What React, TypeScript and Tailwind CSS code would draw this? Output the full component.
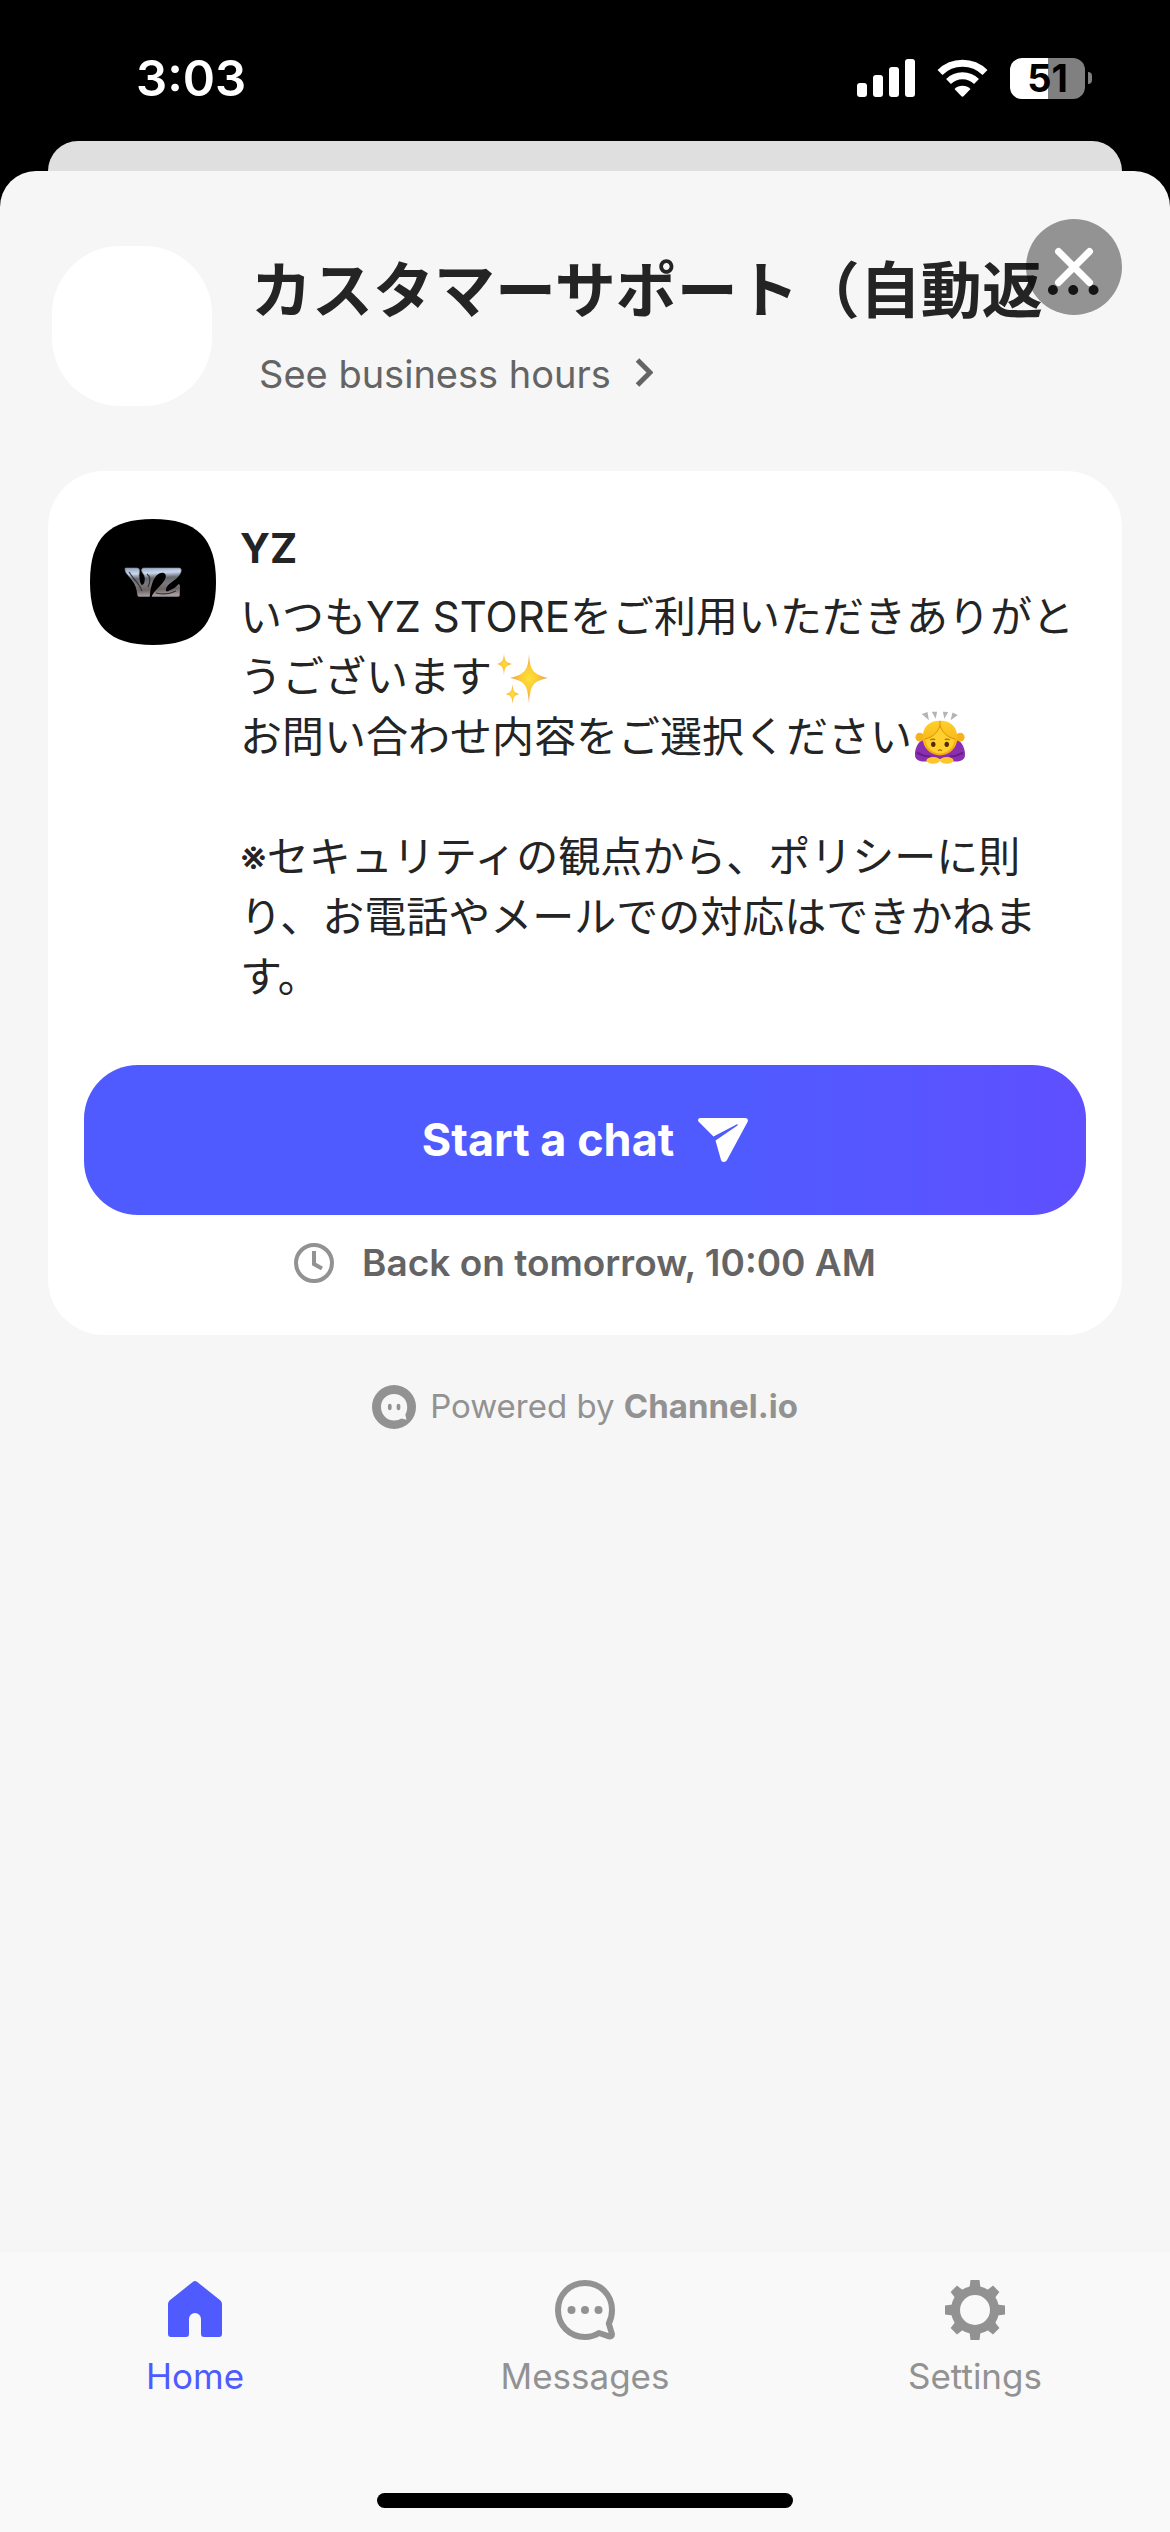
import React from 'react';

function StatusBar() {
  return (
    <header className="flex h-[141px] items-start justify-between pt-[54px] pr-[78px] pl-[136px] text-white">
      <time className="text-[49px] leading-[50px] font-semibold">3:03</time>
      <div className="flex h-12 items-center gap-[22px]">
        <svg width="58" height="38" viewBox="0 0 58 38" fill="currentColor" role="img" aria-label="Cellular signal">
          <rect x="0" y="24" width="10" height="14" rx="3" />
          <rect x="16" y="16" width="10" height="22" rx="3" />
          <rect x="32" y="8" width="10" height="30" rx="3" />
          <rect x="48" y="0" width="10" height="38" rx="3" />
        </svg>
        <svg width="51" height="38" viewBox="0 0 51 38" role="img" aria-label="Wi-Fi">
          <g fill="none" stroke="currentColor" strokeWidth="7">
            <path d="M3 13.500a32 32 0 0 1 45 0" />
            <path d="M11.500 22.500a20 20 0 0 1 28 0" />
          </g>
          <path d="M17.500 30a11.500 11.500 0 0 1 16 0l-6.700 7a1.800 1.800 0 0 1-2.600 0z" fill="currentColor" />
        </svg>
        <div className="flex items-center gap-[3px]" role="img" aria-label="Battery at 51 percent">
          <div className="flex h-[41px] w-[75px] items-center justify-center rounded-[12px] bg-linear-to-r from-white from-51% to-[#808080] to-51% text-[38px] leading-none font-bold text-black">
            51
          </div>
          <div className="h-3 w-1 rounded-r-full bg-[#808080]" />
        </div>
      </div>
    </header>
  );
}

function StoreAvatar() {
  return (
    <svg className="shrink-0" width="126" height="126" viewBox="0 0 126 126" role="img" aria-label="YZ logo">
      <defs>
        <linearGradient id="chrome" x1="0" y1="0" x2="0.100" y2="1">
          <stop offset="0" stopColor="#8fa2c0" />
          <stop offset="0.220" stopColor="#c9d8ee" />
          <stop offset="0.400" stopColor="#66686e" />
          <stop offset="0.600" stopColor="#7d7979" />
          <stop offset="0.800" stopColor="#6c6463" />
          <stop offset="1" stopColor="#a79a99" />
        </linearGradient>
      </defs>
      <path
        d="M63 0C107 0 126 19 126 63C126 107 107 126 63 126C19 126 0 107 0 63C0 19 19 0 63 0Z"
        fill="#000"
      />
      <path
        d="M35 50Q34.500 49 36 49H47Q49.500 49 49.500 52Q48 61 51 66Q53 67.500 54.500 64C56 59 55 57 52 53Q50.500 49 54 49H89.500Q92 49.500 91 53C88 60 81 62 77 67C74 71 76 74 79 72Q85 70 88 66Q89.500 64.500 89.500 67V76Q89.500 77.500 88 77.500H62Q60.500 77.500 61.500 75C66 67 73 64 75 58C75.500 54 71 53 67 57C63 62 61 69 60.500 77Q60 77.500 59 77.500H49Q47.500 77.500 47.500 75C47 65 41 60 37 55Q35 53 35 50Z"
        fill="url(#chrome)"
        stroke="#858b96"
        strokeWidth="0.600"
      />
      <path d="M75 58C75.500 54 71 53 67 57C63 62 61 69 60.500 77.500H61C63 70 74 65 75 58Z" fill="#000" stroke="#000" strokeWidth="1.500" />
      <path d="M39 53C44 61 49 64 52 72M57 55C60 57 61 61 58 68M66 74C74 76 80 75 86 72" fill="none" stroke="#34343a" strokeWidth="1.200" />
    </svg>
  );
}

function Sparkles() {
  return (
    <svg className="ml-[5px] inline-block align-middle" width="52" height="54" viewBox="0 3 52 54" role="img" aria-label="✨">
      <defs>
        <radialGradient id="spark">
          <stop offset="0" stopColor="#fde03a" />
          <stop offset="0.450" stopColor="#fccb35" />
          <stop offset="1" stopColor="#f0975c" />
        </radialGradient>
      </defs>
      <g fill="url(#spark)">
        <path d="M32 3C33 18 35 23 51 27C36 30 33.500 34 32 52C30.500 34 28 30 13 27C29 23 31 18 32 3Z" />
        <path d="M7 3C7.500 9 9 11.500 15 13C9 14.500 7.500 17 7 24C6.500 17 5 14.500 0 13C5 11.500 6.500 9 7 3Z" />
        <path d="M15.500 33C16 39.500 17 41.500 22.500 43C17 44.500 16 46.500 15.500 53C15 46.500 14 44.500 8.500 43C14 41.500 15 39.500 15.500 33Z" />
      </g>
    </svg>
  );
}

function BowingPerson() {
  return (
    <svg className="ml-0.5 inline-block align-middle" width="52" height="62" viewBox="0 2 54 62" role="img" aria-label="🙇‍♀️">
      <defs>
        <linearGradient id="hair" x1="0" y1="0" x2="0" y2="1">
          <stop offset="0" stopColor="#ffd02c" />
          <stop offset="1" stopColor="#f2a70c" />
        </linearGradient>
      </defs>
      <path d="M8 5L14 3L15.500 11.500ZM18.500 2.500L24 2.500L22.500 10ZM30 2.500L35.500 3L31.500 10ZM40 3.500L45.500 6L38 11.500Z" fill="#b4b4b8" />
      <path d="M10 31C4 34 1 41 1 47C1 53 6 55 14 54L27 52L40 54C48 55 53 53 53 47C53 41 50 34 44 31Z" fill="#8a2fb0" />
      <path d="M3 45Q10 49 17 49M51 45Q44 49 37 49" fill="none" stroke="#6a1c8e" strokeWidth="2" />
      <circle cx="6" cy="29" r="4.500" fill="#f5b31b" />
      <circle cx="48" cy="29" r="4.500" fill="#f5b31b" />
      <path d="M27 12C14 12 9 20 9 30C9 40 17 48 27 48C37 48 45 40 45 30C45 20 40 12 27 12Z" fill="url(#hair)" />
      <path d="M27 16C24 26 17 30 12 31C12 39 19 46 27 46C35 46 42 39 42 31C37 30 30 26 27 16Z" fill="#ffd02e" />
      <path d="M27 12V17C24 26 17 30 11 31M27 17C30 26 37 30 43 31" fill="none" stroke="#d98d07" strokeWidth="1" />
      <ellipse cx="20" cy="36.500" rx="2.300" ry="2.800" fill="#4f2c05" />
      <ellipse cx="34" cy="36.500" rx="2.300" ry="2.800" fill="#4f2c05" />
      <path d="M17 32Q19 30.500 22 31.500M32 31.500Q35 30.500 37 32M25 43Q27 41.500 29 43" fill="none" stroke="#a96c08" strokeWidth="1.300" />
      <ellipse cx="20" cy="53" rx="7" ry="3.500" fill="#fdc62b" />
      <ellipse cx="34" cy="53" rx="7" ry="3.500" fill="#fdc62b" />
    </svg>
  );
}

function HomeIcon() {
  return (
    <svg width="60" height="60" viewBox="0 0 60 60" fill="currentColor" aria-hidden="true">
      <path d="M28 1.800Q30 0 32 1.800L55.500 20.500Q57 22 57 24V54Q57 57 54 57H39Q36 57 36 54V39A6 6 0 0 0 24 39V54Q24 57 21 57H6Q3 57 3 54V24Q3 22 4.500 20.500Z" />
    </svg>
  );
}

function MessagesIcon() {
  return (
    <svg width="60" height="60" viewBox="0 0 60 60" aria-hidden="true">
      <path
        d="M30 3C14.500 3 3 15 3 30S14.500 57 30 57C35.500 57 40 55.500 44 53L54 56.300Q57.500 57 56.800 53.500L53.800 43.500C56 39.500 57 35 57 30C57 15 45.500 3 30 3Z"
        fill="none"
        stroke="currentColor"
        strokeWidth="6"
        strokeLinejoin="round"
      />
      <g fill="currentColor">
        <circle cx="16.500" cy="30" r="4" />
        <circle cx="30" cy="30" r="4" />
        <circle cx="43.500" cy="30" r="4" />
      </g>
    </svg>
  );
}

function SettingsIcon() {
  return (
    <svg width="60" height="60" viewBox="0 0 60 60" aria-hidden="true">
      <circle cx="30" cy="30" r="19.500" fill="none" stroke="currentColor" strokeWidth="9" />
      <g fill="currentColor">
        {[0, 45, 90, 135, 180, 225, 270, 315].map((angle) => (
          <path key={angle} d="M25.500 0H34.500L35.800 10H24.200Z" transform={`rotate(${angle} 30 30)`} />
        ))}
      </g>
    </svg>
  );
}

const tabs = [
  { label: 'Home', Icon: HomeIcon, active: true },
  { label: 'Messages', Icon: MessagesIcon, active: false },
  { label: 'Settings', Icon: SettingsIcon, active: false },
];

function TabBar() {
  return (
    <div className="mt-auto bg-[#f9f9f9] pt-7 pb-6">
      <nav className="grid grid-cols-3">
        {tabs.map(({ label, Icon, active }) => (
          <button
            key={label}
            type="button"
            aria-current={active ? 'page' : undefined}
            className={`flex flex-col items-center gap-3 text-[35px] leading-[48px] ${active ? 'text-[#4f5bff]' : 'text-[#929292]'}`}
          >
            <Icon />
            {label}
          </button>
        ))}
      </nav>
      <div className="mx-auto mt-[93px] h-[15px] w-[416px] rounded-full bg-black" />
    </div>
  );
}

export default function App() {
  return (
    <div className="flex min-h-screen flex-col bg-black font-['Inter','Noto_Sans_CJK_JP',sans-serif]" lang="ja">
      <StatusBar />
      <div className="mx-12 h-[30px] rounded-t-[30px] bg-[#dfdfdf]" />
      <main className="relative flex grow flex-col rounded-t-[36px] bg-[#f6f6f6] pt-[75px]">
        <section className="flex gap-[39px] pr-[58px] pl-[52px]">
          <div className="size-40 shrink-0 rounded-[68px] bg-white" />
          <div className="min-w-0">
            <h1 className="font-['Noto_Sans_CJK_JP',sans-serif] text-[61px] leading-[82px] font-bold whitespace-nowrap text-[#242424]">
              カスタマーサポート（自動返…
            </h1>
            <button type="button" className="flex items-center gap-6 pl-2 text-[38px] leading-[92px] text-[#646464]">
              See business hours
              <svg width="18" height="32" viewBox="0 0 18 32" fill="none" stroke="currentColor" strokeWidth="5" aria-hidden="true">
                <path d="M2.500 2L15 14.500L2.500 27" />
              </svg>
            </button>
          </div>
        </section>
        <button
          type="button"
          aria-label="Close"
          className="absolute top-12 right-12 flex size-24 items-center justify-center rounded-full bg-black/40 text-white"
        >
          <svg width="40" height="40" viewBox="0 0 40 40" fill="none" stroke="currentColor" strokeWidth="7" strokeLinecap="round" aria-hidden="true">
            <path d="M4.500 4.500L35.500 35.500M35.500 4.500L4.500 35.500" />
          </svg>
        </button>

        <section className="mx-12 mt-[51px] rounded-[56px] bg-white px-9 pt-12 pb-6">
          <div className="flex gap-6 pl-[6px] text-[#242424]">
            <StoreAvatar />
            <div className="min-w-0">
              <h2 className="text-[41px] leading-[58px] font-bold">YZ</h2>
              <p className="mt-[10px] text-[42px] leading-[60px] whitespace-nowrap">
                <span className="block h-[60px]">いつもYZ STOREをご利用いただきありがと</span>
                <span className="block h-[60px]">うございます<Sparkles /></span>
                <span className="block h-[60px]">お問い合わせ内容をご選択ください<BowingPerson /></span>
                <span className="block h-[60px]" />
                <span className="block h-[60px]">※セキュリティの観点から、ポリシーに則</span>
                <span className="block h-[60px]">り、お電話やメールでの対応はできかねま</span>
                <span className="block h-[60px]">す。</span>
              </p>
            </div>
          </div>
          <button
            type="button"
            className="mt-[58px] flex h-[150px] w-full items-center justify-center gap-6 rounded-[54px] bg-linear-to-r from-[#4f5bff] from-65% to-[#5f4fff] text-[45px] font-bold text-white"
          >
            Start a chat
            <svg width="50" height="44" viewBox="0 0 50 44" fill="currentColor" aria-hidden="true">
              <path d="M2 0H47.500Q51 0.500 49.500 4L29 42Q28 44 25.500 44Q23.500 44 23 42L17.500 22.500L39.500 7.500Q40.500 6.200 39 6.300L15.500 18.500L0.500 3.500Q-1 1 2 0Z" />
            </svg>
          </button>
          <p className="flex h-24 items-center justify-center gap-7 text-[37px] font-semibold text-[#646464]">
            <svg width="40" height="40" viewBox="0 0 40 40" fill="none" stroke="#929292" strokeWidth="4" aria-hidden="true">
              <circle cx="20" cy="20" r="18" />
              <path d="M20 8V21L28 25.500" />
            </svg>
            Back on tomorrow, 10:00 AM
          </p>
        </section>

        <a href="#channel" className="mx-auto mt-[50px] flex h-11 items-center gap-[14px] text-[33px] text-[#929292]">
          <svg width="44" height="44" viewBox="0 0 44 44" aria-hidden="true">
            <circle cx="22" cy="22" r="22" fill="currentColor" />
            <path d="M22 9C14.500 9 9 14.500 9 22S14.500 35.500 22 35.500C25 35.500 27.500 34.800 29.500 33.500L34.500 34.800L33.300 29.500C34.500 27.500 35.200 25 35.200 22C35.200 14.500 29.500 9 22 9Z" fill="#f6f6f6" />
            <ellipse cx="17.800" cy="22" rx="1.900" ry="3.300" fill="currentColor" />
            <ellipse cx="26.500" cy="22" rx="1.900" ry="3.300" fill="currentColor" />
          </svg>
          <span>
            Powered by <strong className="font-bold">Channel.io</strong>
          </span>
        </a>

        <TabBar />
      </main>
    </div>
  );
}
